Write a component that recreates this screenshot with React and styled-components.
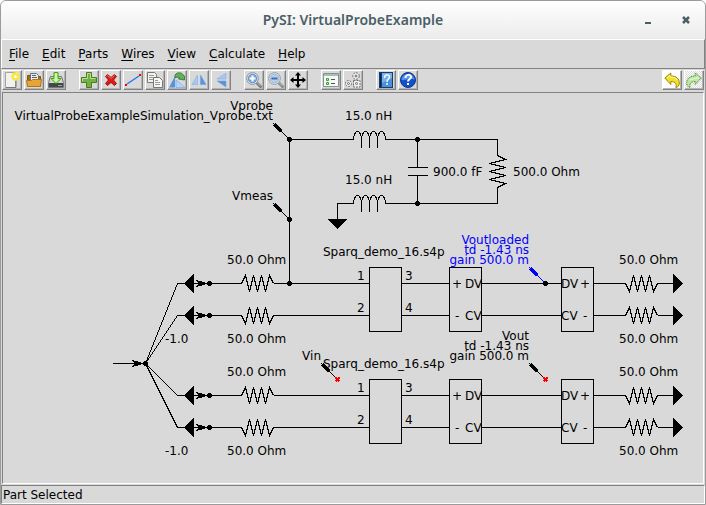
import React from 'react';
import styled, { createGlobalStyle } from 'styled-components';

const GlobalStyle = createGlobalStyle`
  * { box-sizing: border-box; }
  body { margin: 0; background: #fff; }
`;

const Window = styled.div`
  display: flex;
  flex-direction: column;
  min-height: 100vh;
  border: 1px solid #9b9b9b;
  border-radius: 6px 6px 0 0;
  background: #d9d9d9;
  color: #000;
  font: 12px/16px "DejaVu Sans", sans-serif;
  overflow: hidden;
`;

const TitleBar = styled.header`
  display: grid;
  grid-template-columns: 80px 1fr 80px;
  align-items: center;
  height: 38px;
  background: linear-gradient(#fff, #ebebeb);
`;

const Title = styled.h1`
  grid-column: 2;
  margin: 0;
  text-align: center;
  font: 600 14px/20px "Noto Sans", sans-serif;
  color: #4a5f68;
`;

const WindowControls = styled.div`
  display: flex;
  justify-content: flex-end;
  gap: 18px;
  padding-right: 9px;
`;

const ControlButton = styled.button`
  display: flex;
  width: 20px;
  height: 20px;
  padding: 0;
  border: 0;
  background: none;
  align-items: center;
  justify-content: center;
`;

const MenuBar = styled.nav`
  display: flex;
  gap: 13px;
  height: 30px;
  padding: 4px 7px 0;
  border: 1px solid;
  border-color: #fff #828282 #828282 #fff;
`;

const MenuItem = styled.button`
  height: 20px;
  padding: 0;
  border: 0;
  background: none;
  color: inherit;
  font: inherit;
`;

const Mnemonic = styled.span`
  text-decoration: underline;
  text-underline-offset: 2px;
`;

const ToolBar = styled.div`
  display: flex;
  gap: 13px;
  height: 23px;
  padding: 1px 1px 0;
`;

const ToolGroup = styled.div`
  display: flex;
  gap: 2px;
  margin-left: ${(p) => (p.$end ? 'auto' : '0')};
`;

const ToolButton = styled.button`
  display: block;
  width: 20px;
  height: 20px;
  padding: 0;
  border: 1px solid;
  border-color: #fff #828282 #828282 #fff;
  box-shadow: inset -1px -1px #b4b4b4;
  background: ${(p) => p.$fill || '#d9d9d9'};

  svg { display: block; margin: 1px; }
`;

const Canvas = styled.main`
  flex: 1;
  margin: 0 1px 1px;
  border: 1px solid;
  border-color: #828282 #fff #fff #828282;
  overflow: hidden;

  svg { display: block; }
  text { white-space: pre; }
`;

const StatusBar = styled.footer`
  height: 19px;
  padding: 1px;
  border: 1px solid;
  border-color: #828282 #fff #fff #828282;
`;

const icons = {
  new: (
    <>
      <path d="M1.500 .5h10v15h-10z" fill="#f1f1ed" stroke="#a5a5a0" />
      <path d="M2 15.500h10V7" fill="none" stroke="#777" />
      <circle cx="11.500" cy="4.500" r="4.200" fill="#ffee38" />
      <path d="m11.500 1.500 1 2 2 .3-1.500 1.500.4 2.200-1.900-1-1.900 1 .4-2.200-1.500-1.500 2-.3z" fill="#fff" stroke="#edcf00" strokeWidth=".6" />
    </>
  ),
  open: (
    <>
      <path d="M1.500 3.500h4l1 1h8v10h-13z" fill="#ae6c0c" stroke="#855106" />
      <path d="M4.500 1.500h6l2 2v6h-8z" fill="#e6e9ed" stroke="#66717d" />
      <path d="M6 3.500h4M6 5.500h5" stroke="#53677d" />
      <path d="M.500 8.500h5l1-1h9l-1 7h-13z" fill="#e5a53b" stroke="#b97311" />
    </>
  ),
  save: (
    <>
      <path d="M2.500 4.500h11l2 6v5H.500v-5z" fill="#d0d3d1" stroke="#777" />
      <path d="M1 11h14v4H1z" fill="#424846" />
      <path d="M6 .5h4v6h3l-5 5-5-5h3z" fill="#b9f18d" stroke="#45a809" />
      <path d="M8 2v7" stroke="#f5ffe9" />
      <path d="M10 13.500h4" stroke="#a1a5a3" />
    </>
  ),
  add: (
    <>
      <path d="M5.500.5h5v5h5v5h-5v5h-5v-5h-5v-5h5z" fill="#75ae43" stroke="#467d21" />
      <path d="M6.500 1.500h3v5h5M1.500 9.500v-3h5v-5" fill="none" stroke="#b8dc91" />
    </>
  ),
  remove: (
    <>
      <path d="m2.500 4.500 2-2L8 5.500l3.500-3 2 2-3 3.500 3 3.500-2 2L8 10.500l-3.500 3-2-2 3-3.500z" fill="#d81b1b" stroke="#ad1010" />
      <path d="m3.500 4.500 1-1 3.500 3 3.500-3" fill="none" stroke="#f06c60" />
    </>
  ),
  wire: (
    <>
      <path d="M2 12 14 4" stroke="#1678ee" strokeWidth="1.300" />
      <path d="M0 12h2v2H0zM14 2h2v2h-2z" fill="red" />
    </>
  ),
  copy: (
    <>
      <path d="M.5.5h7l2 2v8h-9z" fill="#f2f2ef" stroke="#777974" />
      <path d="M2 3.500h5M2 5.500h5M2 7.500h4" stroke="#999b97" />
      <path d="M6.500 5.500h6l3 3v7h-9z" fill="#f7f7f5" stroke="#777974" />
      <path d="M8 8.500h3M8 10.500h5M8 12.500h5" stroke="#999b97" />
    </>
  ),
  rotate: (
    <>
      <path d="M0 15.500 6 4v11.500z" fill="#5792dc" />
      <path d="m7 8 9 7.500H7z" fill="#b8d4f8" stroke="#77a9e8" strokeWidth=".7" />
      <path d="M6 3c2-3 7-3 8 0l1.500 1v4l-6-1 1-1.500C8.500 5 7.500 5 6 6z" fill="#67ae5c" stroke="#287134" strokeWidth=".8" />
    </>
  ),
  flipX: (
    <>
      <path d="M6.500 3v9.500H1z" fill="#a6c8f3" stroke="#86afdf" strokeWidth=".6" />
      <path d="M9.500 3v9.500H15z" fill="#5693e2" stroke="#74a2db" strokeWidth=".6" />
    </>
  ),
  flipY: (
    <>
      <path d="M13 1v6H4z" fill="#a6c8f3" stroke="#86afdf" strokeWidth=".6" />
      <path d="M13 15V9H4z" fill="#5693e2" stroke="#74a2db" strokeWidth=".6" />
    </>
  ),
  zoomIn: (
    <>
      <path d="m10.500 10.500 4 4" stroke="#777" strokeWidth="3" strokeLinecap="round" />
      <path d="m10.500 10 4 4" stroke="#c6c6c3" />
      <circle cx="6.500" cy="6.500" r="5.900" fill="#e9edf0" stroke="#8b9296" />
      <circle cx="6.500" cy="6.500" r="4.300" fill="#78a8df" stroke="#457bb9" strokeWidth=".7" />
      <path d="M6.500 3.500v6M3.500 6.500h6" stroke="#fff" strokeWidth="2" />
    </>
  ),
  zoomOut: (
    <>
      <path d="m10.500 10.500 4 4" stroke="#888" strokeWidth="3" strokeLinecap="round" />
      <path d="m10.500 10 4 4" stroke="#c6c6c3" />
      <circle cx="6.500" cy="6.500" r="5.900" fill="#dfe3e6" stroke="#999fa2" />
      <circle cx="6.500" cy="6.500" r="4.300" fill="#b5d0ed" stroke="#87abd1" strokeWidth=".7" />
      <path d="M3.500 6.500h6" stroke="#476fae" strokeWidth="2" />
    </>
  ),
  pan: (
    <>
      <path d="M8 2v12M2 8h12" stroke="#000" strokeWidth="2" />
      <path d="m8 0 3 3.500H5zM8 16l3-3.500H5zM0 8l3.500-3v6zM16 8l-3.500-3v6z" />
    </>
  ),
  properties: (
    <>
      <path d="M.500 1.500h15v13H.500z" fill="#f8f8f5" stroke="#80968f" />
      <path d="M1 2h14v2H1z" fill="#a6bfb6" />
      <path d="M3.500 6.500h2v2h-2zM3.500 10.500h2v2h-2z" fill="#b8f0b8" stroke="#31a638" />
      <path d="M8 7.500h4M8 11.500h4" stroke="#555" />
    </>
  ),
  calculate: (
    <g fill="#efefef" stroke="#6c6c6c">
      <circle cx="11" cy="4" r="3.300" strokeDasharray="2 1" />
      <circle cx="11" cy="4" r="1" />
      <circle cx="3.500" cy="11.500" r="3" strokeDasharray="2 1" />
      <circle cx="3.500" cy="11.500" r="1" />
      <path d="M8.500 8.500h6.500v6.500h-6.500z" strokeDasharray="2 1" />
      <circle cx="11.500" cy="11.500" r="1" />
    </g>
  ),
  manual: (
    <>
      <path d="M1 0h14v16H1z" fill="#163c6d" />
      <path d="M4 1h10v14H4z" fill="#4b91d9" />
      <path d="M4 1h10v5L4 11z" fill="#75b3ec" />
      <path d="M2.500 1v14" stroke="#0b2448" />
      <path d="M6.500 6c0-4 5-4 5-1 0 2-2.500 2-2.500 5M9 11v2" fill="none" stroke="#fff" strokeWidth="1.400" />
    </>
  ),
  help: (
    <>
      <circle cx="8" cy="8" r="7.500" fill="#1250cb" stroke="#0a348c" />
      <path d="M1.500 8C2 0 14 0 14.500 8c-5-3-8 1-13 0z" fill="#5795ec" />
      <path d="M5.500 6c0-4 5.500-4 5.500-1 0 2-3 2-3 4.500M8 11v2" fill="none" stroke="#fff" strokeWidth="2" />
    </>
  ),
  undo: (
    <>
      <path d="m.8 6 6-5v3c6 0 8.500 3 8.500 7 0 3-1.500 4-3.500 4.500 1-3 0-6-5-6v3z" fill="#f3df27" stroke="#9a8500" />
      <path d="m3 6 3-2.500V5c4 0 6 1 7.500 3" fill="none" stroke="#fff9a4" />
    </>
  ),
  redo: (
    <>
      <path d="m15.200 6-6-5v3C3.200 4 .700 7 .700 11c0 3 1.500 4 3.500 4.500-1-3 0-6 5-6v3z" fill="#bde69f" stroke="#c4d6b4" />
      <path d="m15.200 6-6-5v3C3.200 4 .700 7 .700 11c0 3 1.500 4 3.500 4.500-1-3 0-6 5-6v3z" fill="none" stroke="#458a2c" strokeDasharray="1 1" />
      <path d="m4 8 6-2 3 0" fill="none" stroke="#effbe8" />
    </>
  ),
};

const dither = 'repeating-conic-gradient(#fff 0 25%, #d9d9d9 0 50%) 0 0 / 2px 2px';

const toolGroups = [
  [['new', 'New'], ['open', 'Open'], ['save', 'Save']],
  [['add', 'Add part'], ['remove', 'Delete part'], ['wire', 'Add wire'], ['copy', 'Duplicate part'], ['rotate', 'Rotate part'], ['flipX', 'Flip horizontally'], ['flipY', 'Flip vertically']],
  [['zoomIn', 'Zoom in'], ['zoomOut', 'Zoom out'], ['pan', 'Pan']],
  [['properties', 'Properties'], ['calculate', 'Calculate']],
  [['manual', 'Manual'], ['help', 'Help']],
];

const menus = ['File', 'Edit', 'Parts', 'Wires', 'View', 'Calculate', 'Help'];

function Tool({ name, label, fill, disabled }) {
  return (
    <ToolButton type="button" aria-label={label} $fill={fill} disabled={disabled}>
      <svg width="16" height="16" viewBox="0 0 16 16">{icons[name]}</svg>
    </ToolButton>
  );
}

function Resistor({ x, y, flip }) {
  const a = flip ? 8 : -8;
  return <path d={`M${x} ${y}l4 ${a}l4 ${-2 * a}l4 ${2 * a}l4 ${-2 * a}l4 ${2 * a}l4 ${-2 * a}l4 ${2 * a}l4 ${-a}`} />;
}

function Inductor({ x, y }) {
  return <path d={`M${x} ${y}${`a4 8 0 0 1 8 0v8v-8`.repeat(3)}a4 8 0 0 1 8 0`} />;
}

function Dot({ x, y }) {
  return <circle cx={x} cy={y} r="2" fill="#000" />;
}

function Probe({ x, y, color = '#000', open }) {
  return (
    <g stroke={color}>
      <path d={`M${x - 16} ${y - 16}l16 16`} />
      <path d={`M${x - 15} ${y - 15}l7 7`} strokeWidth="4" />
      {open ? <path d={`M${x - 2} ${y - 2}l4 4m0 -4l-4 4`} stroke="red" strokeWidth="2" /> : <g stroke="#000"><Dot x={x} y={y} /></g>}
    </g>
  );
}

function ArrowHead({ x, y }) {
  return <path d={`M${x - 1} ${y}l-14 -4l4 4l-4 4z`} fill="#000" stroke="none" />;
}

function Port({ y }) {
  return (
    <>
      <path d={`M145 363L177 ${y}H241M273 ${y}H369M401 ${y}H449M481 ${y}H561M593 ${y}H625M657 ${y}H673`} />
      <path d={`M184 ${y}l9 -9v18zM673 ${y - 9}v18l9 -9z`} fill="#000" />
      <ArrowHead x={209} y={y} />
      <Dot x={209} y={y} />
    </>
  );
}

function Label({ x, y, end, children, color = '#000' }) {
  return <text x={x} y={y} textAnchor={end ? 'end' : 'start'} fill={color}>{children}</text>;
}

function Channel({ y }) {
  return (
    <g>
      <g fill="none" stroke="#000" shapeRendering="crispEdges" transform="translate(.5 .5)">
        <Port y={y} />
        <Port y={y + 32} />
        <Resistor x={241} y={y} />
        <Resistor x={241} y={y + 32} flip />
        <Resistor x={625} y={y} flip />
        <Resistor x={625} y={y + 32} />
        <path d={`M369 ${y - 16}h32v64h-32zM449 ${y - 16}h32v64h-32zM561 ${y - 16}h32v64h-32z`} />
      </g>
      <Label x={227} y={y - 19}>50.0 Ohm</Label>
      <Label x={227} y={y + 60}>50.0 Ohm</Label>
      <Label x={165} y={y + 60}>-1.0</Label>
      <Label x={619} y={y - 19}>50.0 Ohm</Label>
      <Label x={619} y={y + 60}>50.0 Ohm</Label>
      <Label x={323} y={y - 27}>Sparq_demo_16.s4p</Label>
      <Label x={357} y={y - 3}>1</Label>
      <Label x={357} y={y + 29}>2</Label>
      <Label x={405} y={y - 3}>3</Label>
      <Label x={405} y={y + 29}>4</Label>
      <Label x={452} y={y + 5}>+</Label>
      <Label x={455} y={y + 37}>-</Label>
      <Label x={465} y={y + 5}>DV</Label>
      <Label x={465} y={y + 37}>CV</Label>
      <Label x={561} y={y + 5}>DV</Label>
      <Label x={561} y={y + 37}>CV</Label>
      <Label x={580} y={y + 5}>+</Label>
      <Label x={583} y={y + 37}>-</Label>
    </g>
  );
}

function Schematic() {
  return (
    <svg width="700" height="389" viewBox="3 93 700 389" role="img" aria-label="Virtual probe schematic">
      <Channel y={283} />
      <Channel y={395} />
      <g fill="none" stroke="#000" shapeRendering="crispEdges" transform="translate(.5 .5)">
        <path d="M112 363H145M289 283V139H353M385 139H497V155M497 187V203H385M353 203H337V219" />
        <path d="M417 139V167M407 167H427M407 175H427M417 175V203" />
        <path d="M497 155l8 4l-16 4l16 4l-16 4l16 4l-16 4l16 4l-8 4" />
        <path d="M328 219h18l-9 9z" fill="#000" />
        <ArrowHead x={145} y={363} />
        <Inductor x={353} y={139} />
        <Inductor x={353} y={203} />
        <Dot x={145} y={363} />
        <Dot x={289} y={283} />
        <Dot x={417} y={139} />
        <Dot x={417} y={203} />
        <Probe x={289} y={139} />
        <Probe x={289} y={219} />
        <Probe x={545} y={283} color="#00f" />
        <Probe x={337} y={379} open />
        <Probe x={545} y={379} open />
      </g>
      <Label x={273} y={110} end>Vprobe</Label>
      <Label x={273} y={120} end>VirtualProbeExampleSimulation_Vprobe.txt</Label>
      <Label x={273} y={200} end>Vmeas</Label>
      <Label x={345} y={120}>15.0 nH</Label>
      <Label x={345} y={184}>15.0 nH</Label>
      <Label x={433} y={176}>900.0 fF</Label>
      <Label x={513} y={176}>500.0 Ohm</Label>
      <Label x={529} y={244} end color="#00f">Voutloaded</Label>
      <Label x={529} y={254} end color="#00f">td -1.43 ns</Label>
      <Label x={529} y={264} end color="#00f">gain 500.0 m</Label>
      <Label x={529} y={340} end>Vout</Label>
      <Label x={529} y={350} end>td -1.43 ns</Label>
      <Label x={529} y={360} end>gain 500.0 m</Label>
      <Label x={321} y={360} end>Vin</Label>
    </svg>
  );
}

export default function App() {
  return (
    <Window>
      <GlobalStyle />
      <TitleBar>
        <Title>PySI: VirtualProbeExample</Title>
        <WindowControls>
          <ControlButton type="button" aria-label="Minimize">
            <svg width="10" height="10"><path d="M2 8h6" stroke="#4a5f68" strokeWidth="2" /></svg>
          </ControlButton>
          <ControlButton type="button" aria-label="Close">
            <svg width="10" height="10"><path d="m2 2 6 6m0-6-6 6" stroke="#4a5f68" strokeWidth="2.500" /></svg>
          </ControlButton>
        </WindowControls>
      </TitleBar>
      <MenuBar>
        {menus.map((m) => (
          <MenuItem type="button" key={m}><Mnemonic>{m[0]}</Mnemonic>{m.slice(1)}</MenuItem>
        ))}
      </MenuBar>
      <ToolBar>
        {toolGroups.map((group) => (
          <ToolGroup key={group[0][0]}>
            {group.map(([name, label]) => <Tool key={name} name={name} label={label} />)}
          </ToolGroup>
        ))}
        <ToolGroup $end>
          <Tool name="undo" label="Undo" fill="#fff" />
          <Tool name="redo" label="Redo" fill={dither} disabled />
        </ToolGroup>
      </ToolBar>
      <Canvas><Schematic /></Canvas>
      <StatusBar>Part Selected</StatusBar>
    </Window>
  );
}
